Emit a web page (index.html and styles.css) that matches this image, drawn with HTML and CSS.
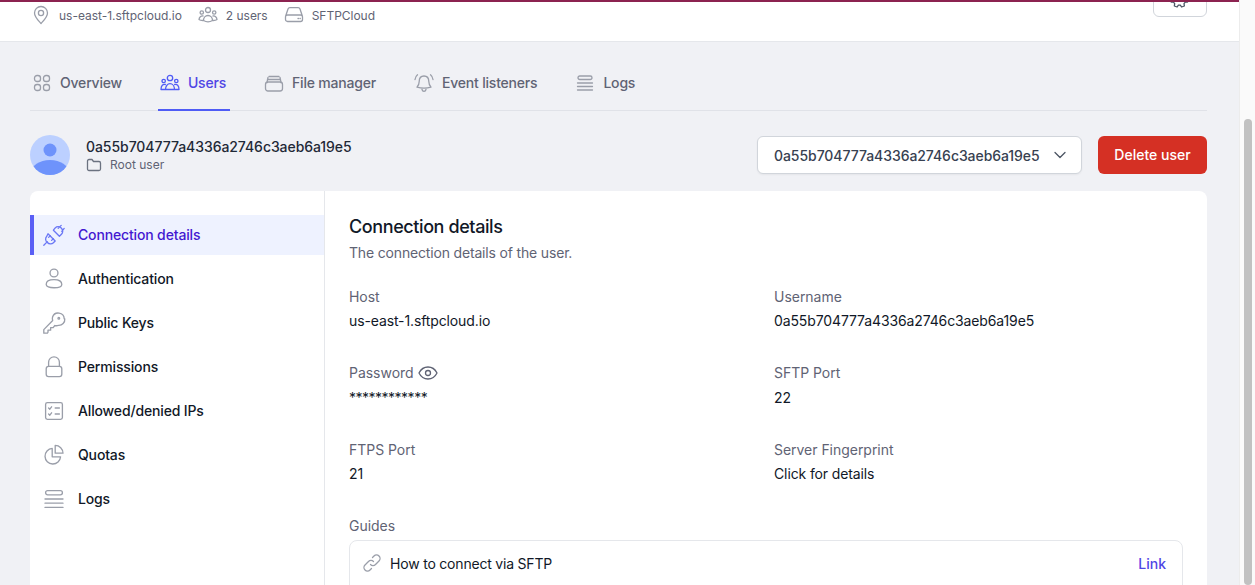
FILE: index.html
```html
<!DOCTYPE html>
<html lang="en">
<head>
<meta charset="utf-8">
<title>Users</title>
<link rel="stylesheet" href="styles.css">
</head>
<body>
<div class="page">
  <main class="main">
    <header class="topbar">
      <div class="meta">
        <span class="meta-item">
          <svg class="ic-meta" viewBox="0 0 20 20"><path d="M10 18.500c-1-1.300-6.500-6-6.500-10.500a6.500 6.500 0 0 1 13 0c0 4.500-5.500 9.200-6.500 10.500z"/><circle cx="10" cy="8" r="2.600"/></svg>
          us-east-1.sftpcloud.io
        </span>
        <span class="meta-item">
          <svg class="ic-meta" viewBox="0 0 20 20"><circle cx="10" cy="5" r="2.500"/><circle cx="3.800" cy="7.500" r="1.700"/><circle cx="16.200" cy="7.500" r="1.700"/><path d="M5.500 15.500c0-3 2-5 4.500-5s4.500 2 4.500 5c-2.500 1.500-6.500 1.500-9 0zM5 11c-2-.3-3.700 1-4 3.500.8.700 2.200 1 3.800 1M15 11c2-.3 3.700 1 4 3.500-.8.700-2.200 1-3.800 1"/></svg>
          2 users
        </span>
        <span class="meta-item">
          <svg class="ic-meta" viewBox="0 0 20 20"><path d="M1.500 11.500 4 4a2 2 0 0 1 1.900-1.300h8.200A2 2 0 0 1 16 4l2.500 7.500M3.500 10h13a2 2 0 0 1 2 2v2.500a2 2 0 0 1-2 2h-13a2 2 0 0 1-2-2V12a2 2 0 0 1 2-2zM14 13.500h.5M16 13.500h.3"/></svg>
          SFTPCloud
        </span>
      </div>
      <button class="gear-btn" type="button" aria-label="Settings">
        <svg class="ic-gear" viewBox="0 0 20 20"><path d="M8.500 2h3l.5 2.300 1.700.8 2.100-1.100 1.800 2.400-1.600 1.700.3 1.900 2 1.200-.8 2.900-2.300.1-1.200 1.500.4 2.300-2.800 1-1.300-1.900h-1.900l-1.300 1.900-2.800-1 .4-2.300-1.200-1.500-2.300-.1-.8-2.900 2-1.200.3-1.900L1.700 6.400l1.800-2.400 2.100 1.100 1.700-.8z"/><circle cx="10" cy="10.500" r="2.800"/></svg>
      </button>
    </header>

    <div class="body-wrap">
      <nav class="tabs">
        <a class="tab">
          <svg class="ic-tab" viewBox="0 0 20 20"><rect x="2.500" y="2.500" width="6" height="6" rx="2.600"/><rect x="11.500" y="2.500" width="6" height="6" rx="2.600"/><rect x="2.500" y="11.500" width="6" height="6" rx="2.600"/><rect x="11.500" y="11.500" width="6" height="6" rx="2.600"/></svg>
          Overview
        </a>
        <a class="tab tab-active">
          <svg class="ic-tab" viewBox="0 0 20 20"><circle cx="10" cy="5" r="2.700"/><circle cx="3.700" cy="8" r="1.700"/><circle cx="16.300" cy="8" r="1.700"/><path d="M5.500 16.500c0-3.500 2-5.800 4.500-5.800s4.500 2.300 4.500 5.800zM5.300 11.500c-2.300-.5-4.300 1-4.300 5h4M14.700 11.500c2.300-.5 4.300 1 4.300 5h-4"/></svg>
          Users
        </a>
        <a class="tab">
          <svg class="ic-tab" viewBox="0 0 20 20"><path d="M5 3.500h10M3.500 6.500h13"/><rect x="1.500" y="9" width="17" height="9" rx="2.500"/><path d="M3 9.500 4 4.500M17 9.500l-1-5"/></svg>
          File manager
        </a>
        <a class="tab">
          <svg class="ic-tab" viewBox="0 0 20 20"><path d="M10 3c-3.200 0-4.800 2.500-4.800 5.500 0 3-1.200 4.500-2.200 5.700 4.500 1.300 9.500 1.300 14 0-1-1.200-2.200-2.700-2.200-5.700C14.800 5.500 13.200 3 10 3zM8 16.500c.3 1.200 1 1.800 2 1.800s1.700-.6 2-1.800M1 6.500C1.300 4.500 2 3 3.500 1.800M19 6.500c-.3-2-1-3.500-2.500-4.700"/></svg>
          Event listeners
        </a>
        <a class="tab">
          <svg class="ic-tab" viewBox="0 0 20 20"><rect x="3" y="3" width="14" height="3.500" rx="1.700"/><path d="M2.500 10h15M2.500 13.500h15M2.500 17h15"/></svg>
          Logs
        </a>
      </nav>

      <section class="user-row">
        <svg class="avatar" viewBox="0 0 40 40"><defs><clipPath id="avatar-clip"><circle cx="20" cy="20" r="20"/></clipPath></defs><circle cx="20" cy="20" r="20" fill="#bcd0ff"/><g clip-path="url(#avatar-clip)"><circle cx="20" cy="15" r="6.500" fill="#6e93fb"/><ellipse cx="20" cy="38" rx="19" ry="13" fill="#6e93fb"/></g></svg>
        <div class="user-info">
          <div class="user-name">0a55b704777a4336a2746c3aeb6a19e5</div>
          <div class="user-sub">
            <svg class="ic-folder" viewBox="0 0 16 16"><path d="M1.500 4a1.500 1.500 0 0 1 1.500-1.500h3l1.500 2H13A1.500 1.500 0 0 1 14.500 6v6a1.500 1.500 0 0 1-1.500 1.500H3A1.500 1.500 0 0 1 1.500 12z"/></svg>
            Root user
          </div>
        </div>
        <div class="user-select">
          0a55b704777a4336a2746c3aeb6a19e5
          <svg class="ic-chev" viewBox="0 0 16 16"><path d="m3 5.500 5 5 5-5"/></svg>
        </div>
        <button class="delete-btn" type="button">Delete user</button>
      </section>

      <section class="card">
        <aside class="side">
          <a class="side-item side-active">
            <svg class="ic-side" viewBox="0 0 20 20"><path d="M1.500 18.500l3-3M5 9l6 6-1.500 1.500a3.500 3.500 0 0 1-5-.2 3.500 3.500 0 0 1-.5-5.300zM7 10.500l-1.500 1.500M9.500 13l-1.500 1.500M16 2l-2.500 2.500M18.500 4.500 16.500 7M9.500 6l5 5 1.700-1.700a3.500 3.500 0 0 0 0-5l-.2-.2a3.500 3.500 0 0 0-5 0z"/></svg>
            <span class="side-label">Connection details</span>
          </a>
          <a class="side-item">
            <svg class="ic-side" viewBox="0 0 20 20"><circle cx="10" cy="5" r="3.300"/><path d="M3.500 14.500c0-2.500 2.500-4 6.500-4s6.500 1.500 6.500 4c0 1.800-2.500 2.800-6.500 2.800s-6.500-1-6.500-2.800z"/></svg>
            <span class="side-label">Authentication</span>
          </a>
          <a class="side-item">
            <svg class="ic-side" viewBox="0 0 20 20"><path d="M18.500 6.500a5 5 0 0 0-9.700-1.500c-.3 1-.2 2 .1 2.900L1.500 15.500v3h3l.5-.8V16h2.200v-2.200h2.100l1.400-1.700c1 .3 2 .2 3-.1a5 5 0 0 0 5.300-5.500z"/><circle cx="14" cy="6" r=".7"/></svg>
            <span class="side-label">Public Keys</span>
          </a>
          <a class="side-item">
            <svg class="ic-side" viewBox="0 0 20 20"><path d="M5.500 9.500V6a4.500 4.500 0 0 1 9 0v3.500"/><rect x="3.500" y="9.500" width="13" height="8.500" rx="2"/></svg>
            <span class="side-label">Permissions</span>
          </a>
          <a class="side-item">
            <svg class="ic-side" viewBox="0 0 20 20"><rect x="3" y="3" width="14" height="14" rx="1.500"/><path d="m5.500 7.500 1 1 1.500-2M5.500 12.500l1 1 1.500-2M11 7.500h3.500M11 12.500h3.500"/></svg>
            <span class="side-label">Allowed/denied IPs</span>
          </a>
          <a class="side-item">
            <svg class="ic-side" viewBox="0 0 20 20"><path d="M8.500 4.500a6.500 6.500 0 1 0 7 7h-7z"/><path d="M11 2v6.500h6.500A6.500 6.500 0 0 0 11 2z"/></svg>
            <span class="side-label">Quotas</span>
          </a>
          <a class="side-item">
            <svg class="ic-side" viewBox="0 0 20 20"><rect x="3" y="3" width="14" height="3.500" rx="1.700"/><path d="M2.500 10h15M2.500 13.500h15M2.500 17h15"/></svg>
            <span class="side-label">Logs</span>
          </a>
        </aside>

        <div class="details">
          <h2 class="title">Connection details</h2>
          <p class="subtitle">The connection details of the user.</p>
          <div class="fields">
            <div class="field">
              <div class="label">Host</div>
              <div class="value">us-east-1.sftpcloud.io</div>
            </div>
            <div class="field">
              <div class="label">Username</div>
              <div class="value">0a55b704777a4336a2746c3aeb6a19e5</div>
            </div>
            <div class="field">
              <div class="label">Password <svg class="ic-eye" viewBox="0 0 20 16"><path d="M1 8c2-4 5-6 9-6s7 2 9 6c-2 4-5 6-9 6s-7-2-9-6z"/><circle cx="10" cy="8" r="2.500"/></svg></div>
              <div class="value value-secret">************</div>
            </div>
            <div class="field">
              <div class="label">SFTP Port</div>
              <div class="value">22</div>
            </div>
            <div class="field">
              <div class="label">FTPS Port</div>
              <div class="value">21</div>
            </div>
            <div class="field">
              <div class="label">Server Fingerprint</div>
              <div class="value">Click for details</div>
            </div>
          </div>
          <div class="label">Guides</div>
          <div class="guide">
            <svg class="ic-link" viewBox="0 0 20 20"><path d="M8.500 11.500a3.500 3.500 0 0 0 5 0l3.500-3.500a3.500 3.500 0 0 0-5-5l-1.500 1.500"/><path d="M11.500 8.500a3.500 3.500 0 0 0-5 0L3 12a3.500 3.500 0 0 0 5 5l1.500-1.500"/></svg>
            <span class="guide-text">How to connect via SFTP</span>
            <a class="guide-link">Link</a>
          </div>
        </div>
      </section>
    </div>
  </main>
  <div class="scrollbar"><div class="thumb"></div></div>
</div>
</body>
</html>
```

FILE: styles.css
```css
* { box-sizing: border-box; }
html, body { margin: 0; height: 585px; overflow: hidden; }
body {
  font-family: Inter, "Liberation Sans", sans-serif;
  font-size: 14px;
  color: #111827;
  background: #f0f1f5;
}
svg { fill: none; stroke: #9a9ea9; stroke-width: 1.3; stroke-linecap: round; stroke-linejoin: round; flex: none; }

.page { display: flex; height: 585px; overflow: hidden; }
.main { flex: 1; min-width: 0; }

.scrollbar { width: 16px; background: #fafafa; border-left: 1px solid #ececec; padding: 119px 3px 0 4px; }
.thumb { height: 466px; background: #c1c1c1; border-radius: 4px; }

.topbar {
  height: 42px;
  background: #fff;
  border-top: 2px solid #8c2350;
  border-bottom: 1px solid #e5e7eb;
  padding: 0 32px 0 31px;
  display: flex;
  justify-content: space-between;
  overflow: hidden;
}
.meta { display: flex; gap: 16px; height: 26px; align-items: center; font-size: 12px; color: #5f6374; letter-spacing: -.02px; }
.meta-item { display: flex; align-items: center; gap: 8px; }
.ic-meta { width: 20px; height: 20px; }
.gear-btn {
  width: 54px;
  height: 38px;
  margin-top: -23px;
  background: #fff;
  border: 1px solid #d1d5db;
  border-radius: 6px;
  padding: 0;
  display: flex;
  align-items: center;
  justify-content: center;
}
.ic-gear { width: 20px; height: 20px; stroke: #4b5563; }

.body-wrap { padding: 0 32px 0 30px; }

.tabs { display: flex; gap: 32px; height: 69px; border-bottom: 1px solid #e0e2e8; }
.tab {
  display: flex;
  align-items: center;
  gap: 8px;
  padding: 14px 4px 0 2px;
  font-weight: 500;
  letter-spacing: -.2px;
  color: #5f6374;
  border-bottom: 2px solid transparent;
  height: 69px;
}
.tab-active { color: #4f46e5; border-bottom-color: #4f5bf5; }
.tab-active svg { stroke: #4f5bf5; }
.ic-tab { width: 20px; height: 20px; }

.user-row { display: flex; align-items: center; margin-top: 24px; height: 40px; }
.avatar { width: 40px; height: 40px; stroke: none; }
.user-info { margin-left: 16px; flex: 1; }
.user-name { font-weight: 500; line-height: 20px; color: #1f2937; letter-spacing: -.06px; }
.user-sub { display: flex; align-items: center; gap: 8px; font-size: 12px; line-height: 16px; color: #5f6374; }
.ic-folder { width: 16px; height: 16px; stroke: #6b7280; }
.user-select {
  width: 325px;
  height: 38px;
  display: flex;
  align-items: center;
  justify-content: space-between;
  padding: 0 13px 0 16px;
  background: #fff;
  border: 1px solid #d1d5db;
  border-radius: 6px;
  color: #374151;
  font-weight: 500;
  letter-spacing: -.06px;
  box-shadow: 0 1px 2px rgba(0,0,0,.05);
}
.ic-chev { width: 16px; height: 16px; stroke: #4b5563; }
.delete-btn {
  width: 109px;
  height: 38px;
  margin-left: 16px;
  padding: 0 0 2px;
  background: #d53024;
  color: #fff;
  border: 0;
  border-radius: 6px;
  font: 500 14px Inter, "Liberation Sans", sans-serif;
}

.card {
  margin-top: 16px;
  background: #fff;
  border-radius: 8px 8px 0 0;
  display: flex;
  min-height: 500px;
}
.side { width: 295px; border-right: 1px solid #e5e7eb; padding-top: 24px; display: flex; flex-direction: column; gap: 4px; flex: none; }
.side-item {
  height: 40px;
  display: flex;
  align-items: center;
  gap: 12px;
  padding-left: 8px;
  border-left: 4px solid transparent;
  font-weight: 500;
  letter-spacing: -.15px;
  color: #111827;
}
.side-label { padding-bottom: 2px; }
.side-active { background: #eef2ff; border-left-color: #5a5ff5; color: #4318d1; }
.side-active svg { stroke: #6b78f5; }
.ic-side { width: 24px; height: 24px; stroke-width: 1.1; }

.details { flex: 1; min-width: 0; padding: 24px 24px 0; }
.title { margin: 0; font-size: 18px; line-height: 24px; font-weight: 500; color: #111827; letter-spacing: -.4px; }
.subtitle { margin: 4px 0 0; line-height: 20px; color: #5f6374; letter-spacing: -.17px; }
.fields { display: grid; grid-template-columns: 425px 1fr; row-gap: 31.5px; margin-top: 23px; margin-bottom: 31px; }
.label { display: flex; align-items: center; gap: 4px; height: 20px; color: #5f6374; letter-spacing: -.03px; }
.value { margin-top: 5px; line-height: 20px; color: #111827; letter-spacing: -.12px; }
.value-secret { letter-spacing: -.5px; }
.ic-eye { width: 20px; height: 16px; stroke: #5f6374; }

.guide {
  margin-top: 5px;
  height: 62px;
  border: 1px solid #e5e7eb;
  border-radius: 8px;
  display: flex;
  align-items: center;
  padding: 0 16px 16px 12px;
  gap: 8px;
}
.ic-link { width: 20px; height: 20px; }
.guide-text { flex: 1; color: #111827; letter-spacing: -.2px; }
.guide-link { color: #4f46e5; font-weight: 500; }
```
